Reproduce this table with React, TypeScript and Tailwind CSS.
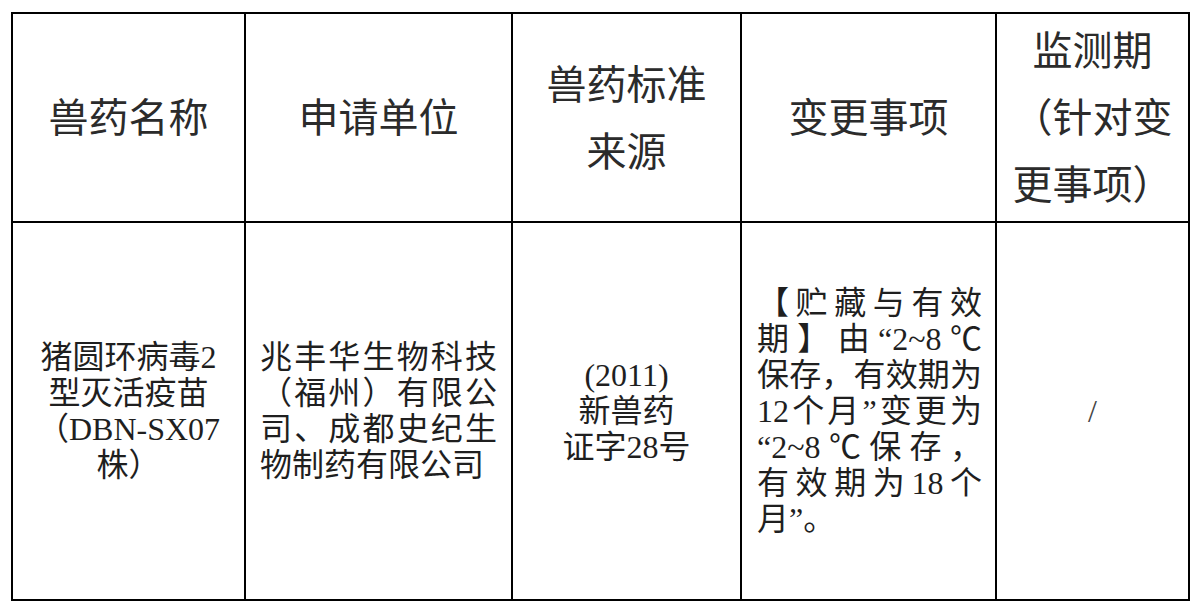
const head = "font-['Noto_Sans_CJK_SC',sans-serif] text-[40px] leading-[67px] text-center align-middle border-2 border-black px-[14px] pt-0 pb-[4px] font-normal text-[#2b2b2b]";
const body = "font-['Liberation_Serif','Noto_Sans_CJK_SC',serif] text-[32px] leading-[36px] align-middle border-2 border-black px-[14px] py-0 text-[#1f1f1f]";

// one justified line (stretched to the full cell width)
function J({ children }: { children: React.ReactNode }) {
  return <div className="text-justify [text-align-last:justify]">{children}</div>;
}

export default function App() {
  return (
    <div className="min-h-[610px] w-[1198px] bg-white pl-[11px] pt-[12px]">
      <table className="w-[1177px] table-fixed border-collapse">
        <colgroup>
          <col className="w-[233px]" />
          <col className="w-[267px]" />
          <col className="w-[229px]" />
          <col className="w-[255px]" />
          <col className="w-[193px]" />
        </colgroup>
        <thead>
          <tr className="h-[209px]">
            <th className={head}>兽药名称</th>
            <th className={head}>申请单位</th>
            <th className={head}>
              兽药标准
              <br />
              来源
            </th>
            <th className={head}>变更事项</th>
            <th className={head}>
              监测期
              <br />
              （针对变
              <br />
              更事项）
            </th>
          </tr>
        </thead>
        <tbody>
          <tr className="h-[378px]">
            <td className={body + " text-center"}>
              猪圆环病毒2
              <br />
              型灭活疫苗
              <br />
              （DBN-SX07
              <br />
              株）
            </td>
            <td className={body}>
              <J>兆丰华生物科技</J>
              <J>（福州）有限公</J>
              <J>司、成都史纪生</J>
              <div>物制药有限公司</div>
            </td>
            <td className={body + " text-center"}>
              (2011)
              <br />
              新兽药
              <br />
              证字28号
            </td>
            <td className={body + " pl-[15px] pr-[13px]"}>
              <J>【贮藏与有效</J>
              <J>期】由“2~8℃</J>
              <J>保存，有效期为</J>
              <J>12个月”变更为</J>
              <J>“2~8℃保存，</J>
              <J>有效期为18个</J>
              <div>月”。</div>
            </td>
            <td className={body + " text-center text-[24px] text-[#444]"}>/</td>
          </tr>
        </tbody>
      </table>
    </div>
  );
}
